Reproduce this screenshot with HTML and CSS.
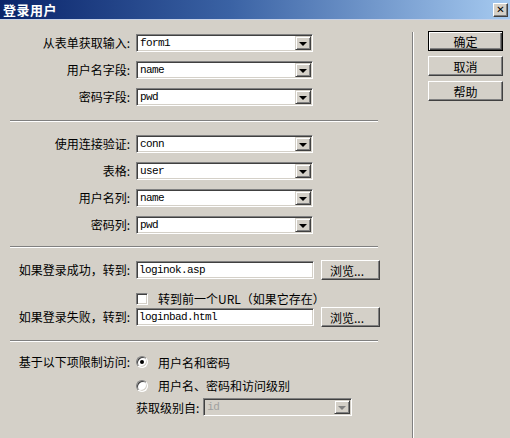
FILE: index.html
```html
<!DOCTYPE html>
<html lang="zh-CN">
<head>
  <meta charset="UTF-8">
  <title>登录用户</title>
  <link rel="stylesheet" href="styles.css">
</head>
<body>
  <div class="dialog">
    <div class="titlebar">
      <span class="title">登录用户</span>
      <span class="close">✕</span>
    </div>

    <div class="main">
      <div class="form">
        <div class="group">
          <div class="row">
            <label>从表单获取输入:</label>
            <div class="combo"><span class="value">form1</span><span class="drop"></span></div>
          </div>
          <div class="row">
            <label>用户名字段:</label>
            <div class="combo"><span class="value">name</span><span class="drop"></span></div>
          </div>
          <div class="row">
            <label>密码字段:</label>
            <div class="combo"><span class="value">pwd</span><span class="drop"></span></div>
          </div>
        </div>

        <div class="sep sep-first"></div>

        <div class="group">
          <div class="row">
            <label>使用连接验证:</label>
            <div class="combo"><span class="value">conn</span><span class="drop"></span></div>
          </div>
          <div class="row">
            <label>表格:</label>
            <div class="combo"><span class="value">user</span><span class="drop"></span></div>
          </div>
          <div class="row">
            <label>用户名列:</label>
            <div class="combo"><span class="value">name</span><span class="drop"></span></div>
          </div>
          <div class="row">
            <label>密码列:</label>
            <div class="combo"><span class="value">pwd</span><span class="drop"></span></div>
          </div>
        </div>

        <div class="sep"></div>

        <div class="urls">
          <div class="row row-url">
            <label>如果登录成功，转到:</label>
            <div class="url-field">
              <input class="textbox" type="text" value="loginok.asp">
              <button class="btn btn-browse">浏览...</button>
            </div>
          </div>
          <div class="row row-check">
            <span></span>
            <div class="option">
              <span class="checkbox"></span>
              <span>转到前一个URL（如果它存在）</span>
            </div>
          </div>
          <div class="row row-url">
            <label>如果登录失败，转到:</label>
            <div class="url-field">
              <input class="textbox" type="text" value="loginbad.html">
              <button class="btn btn-browse">浏览...</button>
            </div>
          </div>
        </div>

        <div class="sep sep-last"></div>

        <div class="access">
          <div class="row row-radio">
            <label>基于以下项限制访问:</label>
            <div class="option">
              <span class="radio checked"></span>
              <span>用户名和密码</span>
            </div>
          </div>
          <div class="row row-radio row-radio2">
            <span></span>
            <div class="option">
              <span class="radio"></span>
              <span>用户名、密码和访问级别</span>
            </div>
          </div>
          <div class="row row-level">
            <span></span>
            <div class="level">
              <span class="level-label">获取级别自:</span>
              <div class="combo combo-disabled"><span class="value">id</span><span class="drop"></span></div>
            </div>
          </div>
        </div>
      </div>

      <div class="divider"></div>

      <div class="actions">
        <button class="btn btn-action btn-default">确定</button>
        <button class="btn btn-action">取消</button>
        <button class="btn btn-action">帮助</button>
      </div>
    </div>
  </div>
</body>
</html>
```

FILE: styles.css
```css
:root {
  --face: #d4d0c8;
  --shadow: #808080;
  --dark: #404040;
  --light: #ffffff;
}

body {
  margin: 0;
  background: var(--face);
  font-family: "Noto Sans CJK SC", "Liberation Sans", sans-serif;
  font-size: 12px;
  color: #000;
}

.dialog {
  width: 510px;
  height: 438px;
  overflow: hidden;
  background: var(--face);
}

/* title bar */
.titlebar {
  height: 19px;
  border-bottom: 1px solid #c8d2e6;
  display: flex;
  align-items: center;
  justify-content: space-between;
  padding: 0 2px 0 3px;
  background: linear-gradient(to right, #0a246a, #3a62a4 45%, #a6caf0);
}

.title {
  color: #fff;
  font-weight: bold;
  font-size: 13px;
  letter-spacing: 0.5px;
  line-height: 19px;
}

.close {
  width: 13px;
  height: 12px;
  margin-top: 1px;
  background: var(--face);
  border: 1px solid;
  border-color: var(--light) var(--dark) var(--dark) var(--light);
  box-shadow: inset -1px -1px var(--shadow);
  font-size: 10px;
  font-weight: bold;
  line-height: 12px;
  text-align: center;
  font-family: "DejaVu Sans", sans-serif;
}

/* main area */
.main {
  display: flex;
  height: 418px;
}

.form {
  width: 412px;
  padding-top: 14px;
  box-sizing: border-box;
}

.divider {
  width: 1px;
  margin-top: 12px;
  background: var(--shadow);
  border-right: 1px solid var(--light);
}

.group {
  display: flex;
  flex-direction: column;
  gap: 9px;
}

.row {
  display: grid;
  grid-template-columns: 130px auto;
  column-gap: 6px;
  align-items: center;
  height: 18px;
}

.row label {
  text-align: right;
  white-space: nowrap;
  line-height: 18px;
}

/* separators */
.sep {
  margin: 12px 0 12px 10px;
  width: 368px;
  border-top: 1px solid var(--shadow);
  border-bottom: 1px solid var(--light);
}

.sep-first {
  margin-top: 14px;
  margin-bottom: 13px;
}

.sep-last {
  margin-top: 13px;
  margin-bottom: 11px;
}

/* combo boxes */
.combo {
  width: 177px;
  height: 18px;
  box-sizing: border-box;
  background: #fff;
  border: 1px solid;
  border-color: var(--shadow) var(--light) var(--light) var(--shadow);
  box-shadow: inset 1px 1px var(--dark), inset -1px -1px var(--face);
  display: flex;
  align-items: center;
  justify-content: space-between;
}

.value,
.textbox {
  font-family: "Liberation Mono", "Courier New", monospace;
  font-size: 11px;
  letter-spacing: -0.6px;
  color: #000;
}

.value {
  padding-left: 3px;
}

.drop {
  width: 14px;
  height: 12px;
  margin-right: 1px;
  background: var(--face);
  border: 1px solid;
  border-color: var(--face) var(--dark) var(--dark) var(--face);
  box-shadow: inset 1px 1px var(--light), inset -1px -1px var(--shadow);
  display: flex;
  align-items: center;
  justify-content: center;
}

.drop::after {
  content: "";
  border-left: 4px solid transparent;
  border-right: 4px solid transparent;
  border-top: 4px solid #000;
  margin-top: 1px;
}

.combo-disabled {
  width: 149px;
  background: var(--face);
}

.combo-disabled .value {
  color: #a0a0a0;
}

.combo-disabled .drop::after {
  border-top-color: var(--shadow);
}

/* url rows */
.row-url {
  height: 20px;
}

.url-field {
  display: flex;
  align-items: center;
  gap: 7px;
}

.textbox {
  width: 178px;
  height: 18px;
  box-sizing: border-box;
  margin: 0;
  padding: 0 0 0 2px;
  background: #fff;
  border: 1px solid;
  border-color: var(--shadow) var(--light) var(--light) var(--shadow);
  box-shadow: inset 1px 1px var(--dark), inset -1px -1px var(--face);
  outline: none;
}

.row-check {
  height: 16px;
  margin: 10px 0 1px;
}

.option {
  display: flex;
  align-items: center;
  gap: 10px;
  white-space: nowrap;
}

.checkbox {
  width: 12px;
  height: 12px;
  box-sizing: border-box;
  background: #fff;
  border: 1px solid;
  border-color: var(--shadow) var(--light) var(--light) var(--shadow);
  box-shadow: inset 1px 1px var(--dark), inset -1px -1px var(--face);
}

.radio {
  position: relative;
  width: 12px;
  height: 12px;
  box-sizing: border-box;
  border-radius: 50%;
  background: #fff;
  border: 1px solid;
  border-color: var(--shadow) var(--light) var(--light) var(--shadow);
  box-shadow: inset 1px 1px var(--dark), inset -1px -1px var(--face);
}

.radio.checked::after {
  content: "";
  position: absolute;
  left: 3px;
  top: 3px;
  width: 4px;
  height: 4px;
  border-radius: 50%;
  background: #000;
}

/* buttons */
.btn {
  background: var(--face);
  border: 1px solid;
  border-color: var(--light) var(--dark) var(--dark) var(--light);
  box-shadow: inset -1px -1px var(--shadow);
  font-family: "Noto Sans CJK SC", sans-serif;
  font-size: 12px;
  color: #000;
  padding: 0;
  cursor: pointer;
}

.btn-browse {
  width: 59px;
  height: 20px;
  text-align: left;
  padding-left: 8px;
}

/* access rows */
.row-radio {
  height: 14px;
}

.row-radio2 {
  margin-top: 10px;
}

.row-level {
  margin-top: 7px;
}

.level {
  display: flex;
  align-items: center;
  gap: 4px;
}

.level-label {
  white-space: nowrap;
}

/* right column */
.actions {
  display: flex;
  flex-direction: column;
  gap: 5px;
  padding: 11px 0 0 14px;
}

.btn-action {
  width: 75px;
  height: 20px;
}

.btn-default {
  border-color: #000;
  box-shadow: inset 1px 1px var(--light), inset -1px -1px var(--dark), inset -2px -2px var(--shadow);
}
```
